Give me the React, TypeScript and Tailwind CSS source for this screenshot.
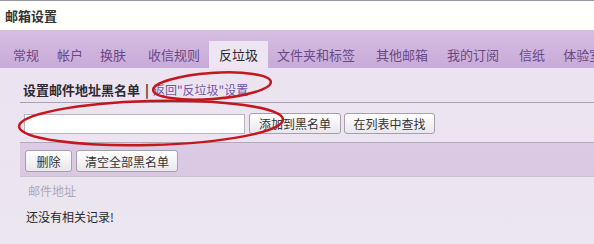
import React from "react";

const tabs = [
  { t: "常规", cls: "ml-[13px]" },
  { t: "帐户", cls: "ml-[18px]" },
  { t: "换肤", cls: "ml-[17px]" },
  { t: "收信规则", cls: "ml-[22px]" },
  { t: "反垃圾", cls: "ml-[9px] px-[9px] w-[59px]", active: true },
  { t: "文件夹和标签", cls: "ml-[9px]" },
  { t: "其他邮箱", cls: "ml-[21px]" },
  { t: "我的订阅", cls: "ml-[19px]" },
  { t: "信纸", cls: "ml-[20px]" },
  { t: "体验室", cls: "ml-[18px]" },
];

function Btn({ children, cls = "" }: { children: React.ReactNode; cls?: string }) {
  return (
    <button
      className={`h-[21px] px-0 whitespace-nowrap flex items-center justify-center shrink-0 text-[12px] leading-[19px] text-[#333] border border-[#a5a0aa] rounded-[3px] bg-gradient-to-b from-[#ffffff] to-[#e9e7ec] ${cls}`}
    >
      {children}
    </button>
  );
}

export default function App() {
  return (
    <div
      className="relative w-[594px] h-[244px] overflow-hidden bg-gradient-to-b from-[#ede2f1] to-[#ebe6ef]"
      style={{ fontFamily: '"Noto Sans CJK SC", "Noto Sans", sans-serif' }}
    >
      <div className="h-px bg-[#9d95a9]" />
      <div className="h-[29px] bg-[#fffffb] pl-[5px] pt-[6px] text-[13px] font-bold leading-[18px] text-[#333]">
        邮箱设置
      </div>
      <div className="h-[38px] bg-gradient-to-b from-[#d6bfe2] to-[#c8aad8] flex items-end">
        {tabs.map((x) => (
          <div
            key={x.t}
            className={`h-[27px] shrink-0 whitespace-nowrap flex items-center text-[13px] leading-[16px] ${x.cls} ${
              x.active ? "bg-[#ede5f1] text-[#2a2530] justify-center" : "text-[#6a4888]"
            }`}
          >
            {x.t}
          </div>
        ))}
      </div>
      <div className="ml-[20px]">
        <div className="h-[35px] pt-[14px] flex items-start text-[#2e2a33] border-b border-[#aaa2b3]">
          <span className="ml-[3px] text-[13px] font-bold leading-[16px]">设置邮件地址黑名单</span>
          <span className="ml-[5px] text-[13px] font-bold leading-[16px]">|</span>
          <span className="ml-[4px] text-[12px] leading-[16px] text-[#6f55a6]">返回"反垃圾"设置</span>
        </div>
        <div className="h-[40px] flex items-start pt-[10px] pl-[4px] border-b border-[#b2a9bc]">
          <input
            className="w-[221px] h-[20px] mt-[1px] bg-white border border-[#b9b3bf] outline-none"
            readOnly
          />
          <Btn cls="ml-[4px] w-[92px]">添加到黑名单</Btn>
          <Btn cls="ml-[3px] w-[91px]">在列表中查找</Btn>
        </div>
        <div className="h-[34px] bg-gradient-to-b from-[#ddcbe6] to-[#dac8e2] flex items-start pt-[7px] pl-[5px] gap-[4px] border-b border-[#cdbfd6]">
          <Btn cls="w-[47px] h-[22px]">删除</Btn>
          <Btn cls="w-[102px] h-[22px]">清空全部黑名单</Btn>
        </div>
        <div className="pl-[8px] pt-[6px] text-[12px] leading-[16px] text-[#b0a8ba]">邮件地址</div>
        <div className="pl-[6px] pt-[10px] text-[12px] leading-[16px] text-[#2a2a2a]">还没有相关记录!</div>
      </div>
      <svg
        className="absolute left-0 top-0 pointer-events-none"
        width="594"
        height="244"
        viewBox="0 0 594 244"
      >
        <ellipse
          cx="212"
          cy="86"
          rx="59"
          ry="13"
          transform="rotate(-4 212 86)"
          fill="none"
          stroke="#c4171d"
          strokeWidth="2.5"
        />
        <ellipse
          cx="151"
          cy="123"
          rx="132"
          ry="22"
          transform="rotate(-1.5 151 123)"
          fill="none"
          stroke="#c4171d"
          strokeWidth="2.5"
        />
      </svg>
    </div>
  );
}
